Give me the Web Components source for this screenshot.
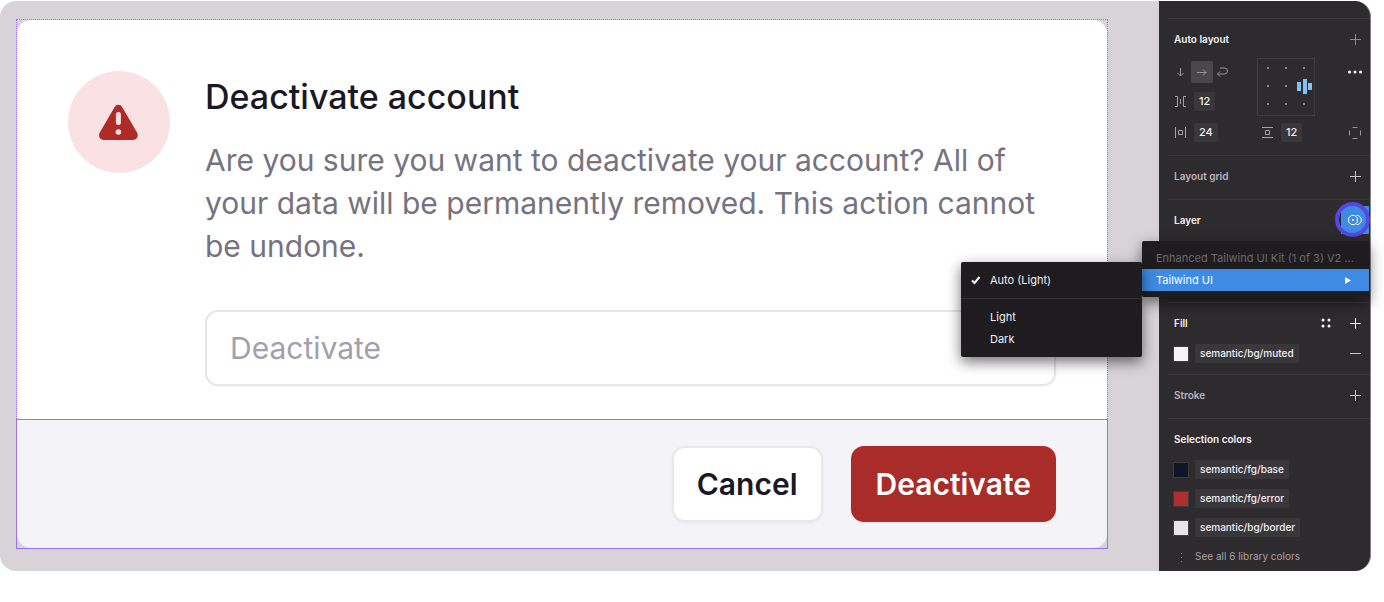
<!DOCTYPE html>
<html lang="en">
<head>
<meta charset="utf-8">
<title>Deactivate account</title>
<style>
  body { margin: 0; background: #fff; font-family: Inter, "Liberation Sans", sans-serif; }
</style>
</head>
<body>
<design-workspace>
  <confirm-dialog slot="canvas" heading="Deactivate account" action="Deactivate">Are you sure you want to deactivate your account? All of your data will be permanently removed. This action cannot be undone.</confirm-dialog>
  <inspector-panel slot="panel"></inspector-panel>
</design-workspace>

<script>
const define = (name, html, setup) => {
  const template = document.createElement('template');
  template.innerHTML = html;
  customElements.define(name, class extends HTMLElement {
    constructor() {
      super();
      this.attachShadow({ mode: 'open' }).append(template.content.cloneNode(true));
    }
    connectedCallback() { if (setup) setup(this, this.shadowRoot); }
  });
};

/* Workspace: canvas on the left, inspector on the right */
define('design-workspace', `
<style>
  :host { display: flex; margin: 1px 13px 31px 0; border-radius: 16px; background: #d8d3d7; }
  main { flex: 1; min-width: 0; padding: 18px 51px 22px 16px; }
</style>
<main><slot name="canvas"></slot></main>
<slot name="panel"></slot>`);

/* Dialog being edited, with its selection outlines */
define('confirm-dialog', `
<style>
  :host { display: block; color: #1b1825; }
  .body-frame { border: 1px dotted #a070f4; border-bottom: 0; }
  .body { display: flex; gap: 35px; padding: 51px 51px 33px; background: #fff; border-radius: 14px 14px 0 0; }
  .badge { flex: none; width: 102px; height: 102px; border-radius: 50%; background: #f9e1e4; display: grid; place-items: center; }
  .content { flex: 1; min-width: 0; }
  h1 { margin: 0 0 17px; font-size: 34px; line-height: 51px; font-weight: 500; }
  p { margin: 0 0 42px; font-size: 30px; line-height: 43px; color: #767280; }
  input { display: block; box-sizing: border-box; width: 100%; height: 76px; padding: 0 23px; border: 2px solid #e7e5ea; border-radius: 13px; background: #fff; font: 400 30px/43px Inter, sans-serif; box-shadow: 0 1px 2px #0000000a; outline: 0; }
  input::placeholder { color: #a3a0ab; opacity: 1; }
  .footer-frame { border: 1px solid #9d6ff2; }
  footer { display: flex; justify-content: flex-end; gap: 28px; padding: 26px 51px; background: #f4f3f8; border-radius: 0 0 14px 14px; }
  button { box-sizing: border-box; height: 76px; padding: 0 23px; border: 2px solid #e9e7ec; border-radius: 13px; background: #fff; color: #1b1825; font: 600 30px/43px Inter, sans-serif; box-shadow: 0 1px 3px #0000000d; }
  .danger { border-color: #aa2c28; background: #aa2c28; color: #fff; }
</style>
<section class="body-frame">
  <div class="body">
    <div class="badge">
      <svg width="42" height="38" viewBox="0 0 42 38" aria-hidden="true">
        <path fill="#ae2b28" d="M16.500 4.200a4.400 4.400 0 0 1 7.800 0L39 29.600c1.900 3.300 0 7.400-4 7.400H5.800c-4 0-5.900-4.100-4-7.400z"/>
        <path stroke="#f9e1e4" stroke-width="5" stroke-linecap="round" d="M20.400 11.500v8"/>
        <circle cx="20.400" cy="29" r="2.800" fill="#f9e1e4"/>
      </svg>
    </div>
    <div class="content">
      <h1></h1>
      <p><slot></slot></p>
      <input type="text" aria-label="Type Deactivate to confirm">
    </div>
  </div>
</section>
<div class="footer-frame">
  <footer>
    <button type="button">Cancel</button>
    <button type="button" class="danger"></button>
  </footer>
</div>`, (host, root) => {
  root.querySelector('h1').textContent = host.getAttribute('heading');
  root.querySelector('.danger').textContent = host.getAttribute('action');
  root.querySelector('input').placeholder = host.getAttribute('action');
});

/* Titled section of the inspector */
define('panel-section', `
<style>
  :host { display: block; margin-left: 9px; padding: 0 8px 13px 6px; border-top: 1px solid #3b383c; }
  header { display: flex; align-items: center; gap: 15px; padding-top: 10px; height: 20px; }
  h2 { flex: 1; margin: 0; font-size: 10px; line-height: 20px; font-weight: 600; color: #f4f2f5; }
  :host([dim]) h2 { color: #b9b5bb; }
</style>
<header><h2></h2><slot name="actions"></slot></header>
<slot></slot>`, (host, root) => {
  root.querySelector('h2').textContent = host.getAttribute('heading');
});

define('icon-button', `
<style>
  :host { display: block; color: #c9c6cb; }
  button { display: grid; place-items: center; width: 14px; height: 14px; padding: 0; border: 0; background: none; color: inherit; }
  svg { display: block; overflow: visible; }
  :host([pressed]) button { width: 22px; height: 22px; border-radius: 2px; background: #4a474b; }
</style>
<button type="button"><svg width="14" height="14" viewBox="0 0 14 14" fill="none" stroke="currentColor" aria-hidden="true"></svg></button>`, (host, root) => {
  const shapes = {
    add: '<path d="M7.500 2v11M2 7.500h11"/>',
    remove: '<path d="M2 6.500h11"/>',
    down: '<path d="M6.500 3v8M3.500 8l3 3 3-3"/>',
    right: '<path d="M2 7.500h9M8 4.500l3 3-3 3"/>',
    wrap: '<path d="M4 3h4.500a2.800 2.800 0 0 1 0 6H1.500M4 6.500 1.500 9 4 11.500"/>',
    more: '<g fill="currentColor" stroke="none"><circle cx="1.500" cy="7" r="1.500"/><circle cx="7" cy="7" r="1.500"/><circle cx="12.500" cy="7" r="1.500"/></g>',
    styles: '<g fill="currentColor" stroke="none"><circle cx="4" cy="4" r="1.500"/><circle cx="10" cy="4" r="1.500"/><circle cx="4" cy="10" r="1.500"/><circle cx="10" cy="10" r="1.500"/></g>',
    sides: '<path d="M4.500 1.500h5M4.500 12.500h5M1.500 4.500v5M12.500 4.500v5"/>'
  };
  root.querySelector('svg').innerHTML = shapes[host.getAttribute('icon')];
  root.querySelector('button').setAttribute('aria-label', host.getAttribute('label'));
});

define('value-chip', `
<style>
  :host { display: inline-block; padding: 0 5px; height: 19px; border-radius: 2px; background: #3a373b; color: #f1eff2; font-size: 10px; line-height: 18px; font-weight: 500; white-space: nowrap; }
</style>
<slot></slot>`);

define('color-token', `
<style>
  :host { display: flex; align-items: center; height: 19px; gap: 7px; }
  i { flex: none; width: 14px; height: 14px; box-shadow: 0 0 0 1px #ffffff14; }
</style>
<i></i><value-chip><slot></slot></value-chip>`, (host, root) => {
  root.querySelector('i').style.background = host.getAttribute('color');
});

define('auto-layout-controls', `
<style>
  :host { display: grid; grid-template-columns: 83px 1fr 14px; row-gap: 7px; margin-top: 9px; color: #a6a2a8; }
  .left { display: grid; gap: 9px; align-content: start; padding-top: 3px; }
  .row { display: flex; align-items: center; gap: 7px; height: 19px; }
  .flow { display: flex; align-items: center; height: 22px; gap: 3px; }
  .mid { padding-left: 4px; }
  svg { display: block; flex: none; }
  value-chip { font-size: 11px; }
  .align { box-sizing: border-box; width: 58px; height: 58px; border: 1px solid #3f3c40; }
  icon-button { color: #98949a; }
  .more { padding-top: 7px; color: #fff; }
  .sides { align-self: center; }
</style>
<div class="left">
  <div class="flow">
    <icon-button icon="down" label="Vertical"></icon-button>
    <icon-button icon="right" label="Horizontal" pressed></icon-button>
    <icon-button icon="wrap" label="Wrap"></icon-button>
  </div>
  <div class="row">
    <svg width="13" height="13" viewBox="0 0 13 13" fill="none" stroke="currentColor" aria-hidden="true"><path d="M1 1.500h2.500v10H1M12 1.500H9.500v10H12M6.500 4v5"/></svg>
    <value-chip>12</value-chip>
  </div>
</div>
<svg class="align" viewBox="0 0 56 56" role="img" aria-label="Align right centre">
  <g fill="#8a868c"><path d="M9 8h2v2H9zM27 8h2v2h-2zM45 8h2v2h-2zM9 26h2v2H9zM27 26h2v2h-2zM9 44h2v2H9zM27 44h2v2h-2zM45 44h2v2h-2z"/></g>
  <g fill="#86c1f6"><path d="M39 23h4v9h-4zM45 20h4v15h-4zM50 24h4v7h-4z"/></g>
</svg>
<icon-button class="more" icon="more" label="Advanced layout"></icon-button>
<div class="row">
  <svg width="13" height="13" viewBox="0 0 13 13" fill="none" stroke="currentColor" aria-hidden="true"><path d="M1.500 1v11M11.500 1v11M4.500 4.500h4v4h-4z"/></svg>
  <value-chip>24</value-chip>
</div>
<div class="row mid">
  <svg width="13" height="13" viewBox="0 0 13 13" fill="none" stroke="currentColor" aria-hidden="true"><path d="M1 1.500h11M1 11.500h11M4.500 4.500h4v4h-4z"/></svg>
  <value-chip>12</value-chip>
</div>
<icon-button class="sides" icon="sides" label="Individual padding"></icon-button>`);

/* Variable-mode menu with its open submenu */
define('mode-menu', `
<style>
  :host { display: block; width: 227px; padding: 6px 0; box-sizing: border-box; background: #1f1c20; box-shadow: 0 5px 14px #0000008c; font-size: 11px; line-height: 22px; color: #f0eef1; border-radius: 2px; }
  button { display: flex; align-items: center; width: 100%; height: 22px; padding: 0 14px; border: 0; background: none; color: inherit; font: inherit; text-align: left; white-space: nowrap; }
  .name { flex: 1; }
  .title { padding: 0 14px; color: #6b686c; white-space: nowrap; }
  .active { background: #3f8ae2; color: #fff; padding-right: 18px; }
  .submenu { position: absolute; top: 21px; right: 100%; width: 181px; box-sizing: border-box; padding: 7px 0; background: #1f1c20; box-shadow: 0 5px 14px #0000008c; border-radius: 2px; }
  .submenu button { padding: 0 9px; gap: 9px; }
  .submenu svg, .submenu i { width: 11px; height: 11px; flex: none; }
  hr { margin: 7px 0; border: 0; border-top: 1px solid #333034; }
</style>
<div class="title">Enhanced Tailwind UI Kit (1 of 3) V2 ...</div>
<button type="button" class="active"><span class="name">Tailwind UI</span><svg width="6" height="7" viewBox="0 0 6 7" fill="#fff" aria-hidden="true"><path d="M0 0l6 3.500L0 7z"/></svg></button>
<div class="submenu">
  <button type="button"><svg viewBox="0 0 11 11" fill="none" stroke="#fff" stroke-width="2" aria-hidden="true"><path d="M2 5.500l2.500 2.500 5-6"/></svg>Auto (Light)</button>
  <hr>
  <button type="button"><i></i>Light</button>
  <button type="button"><i></i>Dark</button>
</div>`);

define('inspector-panel', `
<style>
  :host { display: block; box-sizing: border-box; flex: none; width: 212px; border-right: 1px solid #858286; border-radius: 0 16px 16px 0; background: #2e2b2f; padding: 17px 0 5px; }
  .layer { position: relative; min-height: 89px; }
  mode-menu { position: absolute; top: 41px; right: 1px; }
  .mode { position: relative; display: grid; place-items: center; width: 28px; height: 28px; margin: -4px -7px -4px 0; padding: 0; border: 0; background: #3f8ae2; color: #fff; }
  .mode::after { content: ""; position: absolute; inset: -4px -1px -3px -6px; border: 4px solid #5546e6; border-radius: 50%; }
  .tokens { display: grid; gap: 10px; margin-top: 11px; }
  .fill { padding-bottom: 11px; }
  .fill .tokens { display: flex; justify-content: space-between; align-items: center; }
  .dimmed { color: #8e8a90; }
  .bright { color: #fff; }
  a { display: flex; align-items: center; gap: 7px; height: 19px; color: #a5a1a7; font-size: 10px; line-height: 19px; text-decoration: none; }
  panel-section:last-of-type { padding-bottom: 0; }
</style>
<panel-section heading="Auto layout">
  <icon-button slot="actions" class="dimmed" icon="add" label="Add auto layout"></icon-button>
  <auto-layout-controls></auto-layout-controls>
</panel-section>
<panel-section heading="Layout grid" dim>
  <icon-button slot="actions" icon="add" label="Add layout grid"></icon-button>
</panel-section>
<panel-section heading="Layer" class="layer">
  <button slot="actions" type="button" class="mode" aria-label="Change variable mode">
    <svg width="14" height="12" viewBox="0 0 14 12" fill="none" stroke="currentColor" aria-hidden="true">
      <path d="M3.200 1.500h3.600L9.300 4v4L6.800 10.500H3.200L.7 8V4zM8.500 1.500h1.800l2.900 2.800v3.400l-2.900 2.800H8.500"/>
      <circle cx="5" cy="6" r="1" fill="currentColor" stroke="none"/>
    </svg>
  </button>
  <mode-menu></mode-menu>
</panel-section>
<panel-section heading="Fill" class="fill">
  <icon-button slot="actions" class="bright" icon="styles" label="Styles"></icon-button>
  <icon-button slot="actions" class="bright" icon="add" label="Add fill"></icon-button>
  <div class="tokens">
    <color-token color="#f5f2f6">semantic/bg/muted</color-token>
    <icon-button icon="remove" label="Remove fill"></icon-button>
  </div>
</panel-section>
<panel-section heading="Stroke" dim>
  <icon-button slot="actions" icon="add" label="Add stroke"></icon-button>
</panel-section>
<panel-section heading="Selection colors">
  <div class="tokens">
    <color-token color="#11152a">semantic/fg/base</color-token>
    <color-token color="#ae2f2c">semantic/fg/error</color-token>
    <color-token color="#e8e4e9">semantic/bg/border</color-token>
    <a href="#colors"><svg width="14" height="12" viewBox="0 0 14 12" fill="#77737a" aria-hidden="true"><path d="M7 2h1v1H7zM7 6h1v1H7zM7 10h1v1H7z"/></svg>See all 6 library colors</a>
  </div>
</panel-section>`);
</script>
</body>
</html>
